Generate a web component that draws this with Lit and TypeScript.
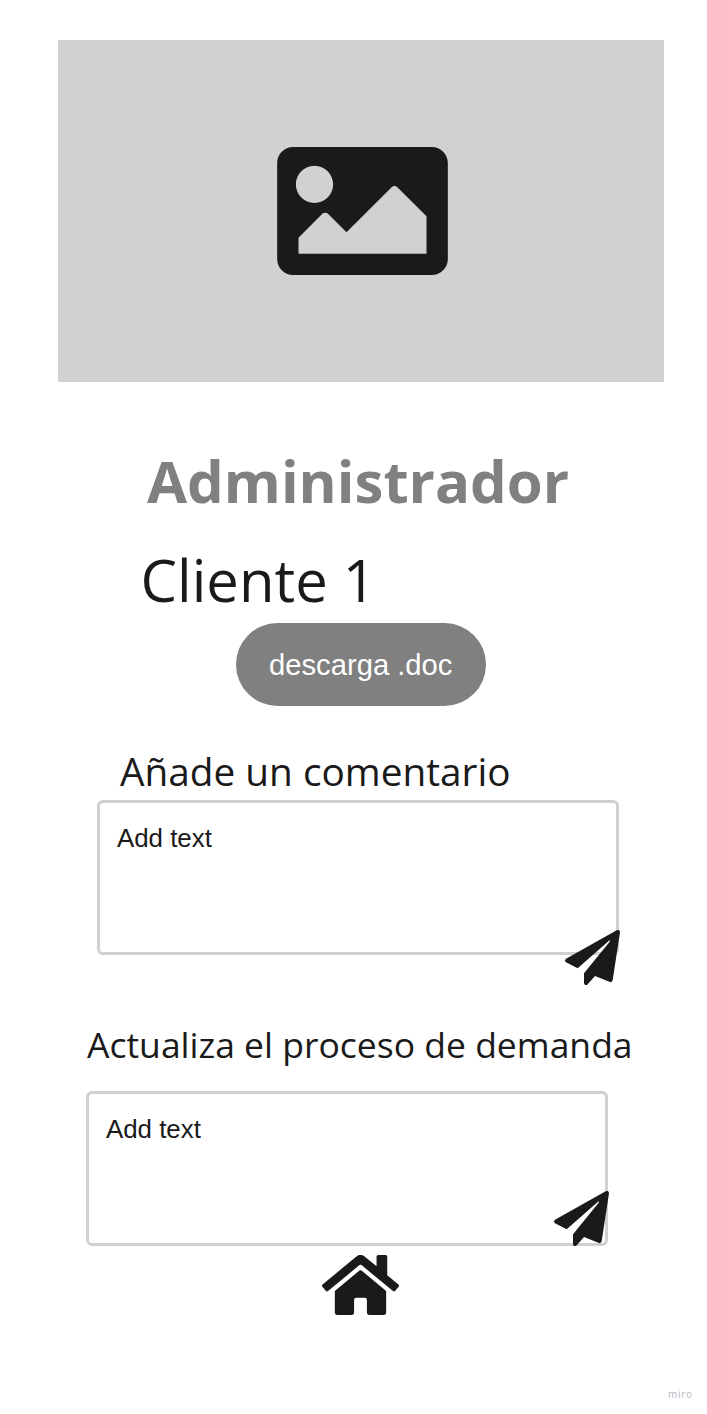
import { LitElement, html, css } from "lit";
import { customElement, property } from "lit/decorators.js";

@customElement("comment-box")
class CommentBox extends LitElement {
  @property() placeholder = "Add text";

  static styles = css`
    :host {
      display: block;
      box-sizing: border-box;
      position: relative;
      width: 522px;
      height: 155px;
      border: 3px solid #d0d0d0;
      border-radius: 6px;
      padding: 19px 16.5px;
      font: 25.9px/32px "Liberation Sans", Arial, sans-serif;
      color: #1a1a1a;
    }
    .send {
      position: absolute;
      right: -3.5px;
      bottom: var(--send-bottom, -33px);
      width: 55px;
      height: 55px;
      fill: #1a1a1a;
    }
  `;

  render() {
    return html`<span>${this.placeholder}</span>
      <svg class="send" viewBox="0 0 165 165">
        <path d="M155 1L3 86Q-3 92 3 97L38 115L132 32Q136 29 134 35L57 130V160Q59 167 66 165L90 138L135 156Q141 158 143 151L165 7Q164-3 155 1z"/>
      </svg>`;
  }
}

@customElement("app-root")
class AppRoot extends LitElement {
  static styles = css`
    :host {
      display: flex;
      flex-direction: column;
      align-items: flex-start;
      box-sizing: border-box;
      width: 707px;
      height: 1414px;
      padding-top: 40px;
      overflow: hidden;
      background: #fff;
      color: #1a1a1a;
      font-family: "Open Sans", sans-serif;
      white-space: nowrap;
    }
    .hero {
      display: flex;
      align-items: center;
      justify-content: center;
      box-sizing: border-box;
      width: 606px;
      height: 342px;
      margin-left: 57.6px;
      padding-left: 3px;
      background: #d1d1d1;
    }
    .hero svg {
      width: 171px;
      height: 128px;
      fill: #1a1a1a;
    }
    .title {
      margin: 59px 0 0 147px;
      font-size: 58.1px;
      line-height: 80px;
      font-weight: 700;
      color: #808080;
    }
    .client {
      margin: 19px 0 0 140.5px;
      font-size: 58px;
      line-height: 80px;
      font-weight: 400;
    }
    .download {
      margin: 3px 0 0 236px;
      width: 249.5px;
      height: 83px;
      border: 0;
      border-radius: 42px;
      padding: 2px 0 0;
      background: #808080;
      color: #fff;
      font: 29.2px "Liberation Sans", Arial, sans-serif;
    }
    .label {
      margin: 0;
      font-weight: 400;
    }
    .comment {
      margin: 41px 0 0 120px;
      font-size: 38.75px;
      line-height: 48px;
    }
    .process {
      margin: 65px 0 0 87px;
      font-size: 35.5px;
      line-height: 48px;
    }
    .first {
      margin: 5px 0 0 97.4px;
    }
    .second {
      margin: 23px 0 0 86.4px;
      --send-bottom: -3px;
    }
    .home {
      width: 77px;
      height: 60px;
      margin: 8.5px 0 0 322px;
      fill: #1a1a1a;
    }
    .brand {
      margin: 71px 0 0 668px;
      font: 400 10px/16px "Open Sans", sans-serif;
      letter-spacing: 0.7px;
      color: #b8b8c2;
    }
  `;

  render() {
    return html`
      <div class="hero">
        <svg viewBox="0 64 512 384">
          <path d="M464 448H48c-26.51 0-48-21.49-48-48V112c0-26.51 21.49-48 48-48h416c26.51 0 48 21.49 48 48v288c0 26.51-21.49 48-48 48zM112 120c-30.928 0-56 25.072-56 56s25.072 56 56 56 56-25.072 56-56-25.072-56-56-56zM64 384h384V272l-87.515-87.515c-4.686-4.686-12.284-4.686-16.971 0L208 320l-55.515-55.515c-4.686-4.686-12.284-4.686-16.971 0L64 336v48z"/>
        </svg>
      </div>
      <h1 class="title">Administrador</h1>
      <h2 class="client">Cliente 1</h2>
      <button class="download">descarga .doc</button>
      <h3 class="label comment">Añade un comentario</h3>
      <comment-box class="first"></comment-box>
      <h3 class="label process">Actualiza el proceso de demanda</h3>
      <comment-box class="second"></comment-box>
      <svg class="home" viewBox="0 32 576 448">
        <path d="M280.37 148.26L96 300.11V464a16 16 0 0 0 16 16l112.06-.29a16 16 0 0 0 15.92-16V368a16 16 0 0 1 16-16h64a16 16 0 0 1 16 16v95.64a16 16 0 0 0 16 16.05L464 480a16 16 0 0 0 16-16V300L295.67 148.26a12.19 12.19 0 0 0-15.3 0zM571.6 251.47L488 182.56V44.05a12 12 0 0 0-12-12h-56a12 12 0 0 0-12 12v72.61L318.47 43a48 48 0 0 0-61 0L4.34 251.47a12 12 0 0 0-1.6 16.9l25.5 31A12 12 0 0 0 45.15 301l235.22-193.74a12.19 12.19 0 0 1 15.3 0L530.9 301a12 12 0 0 0 16.9-1.6l25.5-31a12 12 0 0 0-1.7-16.93z"/>
      </svg>
      <div class="brand">miro</div>
    `;
  }
}
